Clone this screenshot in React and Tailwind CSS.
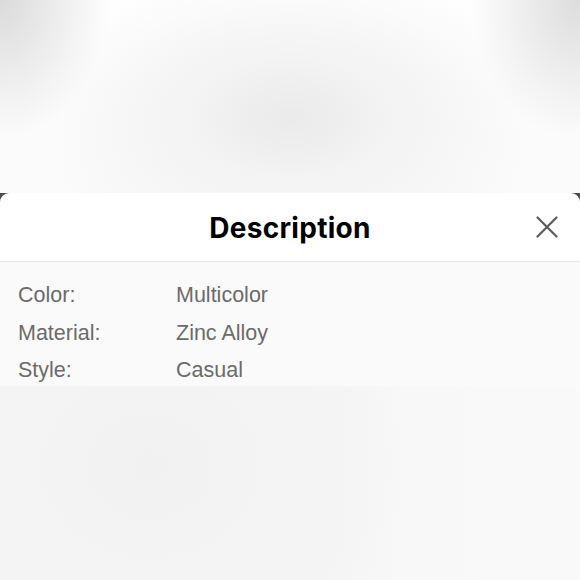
import React from "react";

const rows = [
  { label: "Color:", value: "Multicolor" },
  { label: "Material:", value: "Zinc Alloy" },
  { label: "Style:", value: "Casual" },
];

const CloseIcon = () => (
  <svg width="22" height="22" viewBox="0 0 22 22" fill="none">
    <path
      d="M1.5 1.5L20.5 20.5M20.5 1.5L1.5 20.5"
      stroke="#5c5c5c"
      strokeWidth="2.2"
      strokeLinecap="round"
    />
  </svg>
);

export default function App() {
  return (
    <div className="w-[580px] h-[580px] flex flex-col overflow-hidden bg-white font-['Liberation_Sans',Arial,sans-serif]">
      {/* blurred backdrop above the sheet */}
      <div className="h-[193px] shrink-0 bg-[radial-gradient(ellipse_250px_150px_at_290px_118px,#eaeaea_0%,#f3f3f3_40%,rgba(254,254,254,0)_100%),radial-gradient(ellipse_110px_140px_at_0px_0px,#dadada_0%,rgba(254,254,254,0)_100%),radial-gradient(ellipse_110px_140px_at_580px_0px,#dcdcdc_0%,rgba(254,254,254,0)_100%),linear-gradient(#fefefe,#fafafa)]" />

      <div className="flex-1 flex flex-col bg-[#4a4a4a]">
        <div className="rounded-t-[9px] bg-white h-[69px] shrink-0 flex items-center justify-center relative border-b border-[#e8e8e8]">
          <h1 className="text-[28px] font-bold text-black tracking-[0.3px] pt-[1px] font-['Inter',sans-serif]">
            Description
          </h1>
          <button className="absolute right-[22px] top-[23px]">
            <CloseIcon />
          </button>
        </div>

        <div className="bg-[#fafafa] pt-[15px] h-[124px] shrink-0">
          {rows.map((r) => (
            <div key={r.label} className="flex text-[21.5px] leading-[37.5px] text-[#6b6b6b]">
              <span className="w-[176px] pl-[18px] shrink-0">{r.label}</span>
              <span>{r.value}</span>
            </div>
          ))}
        </div>

        <div className="flex-1 bg-[radial-gradient(ellipse_260px_220px_at_150px_80px,#f1f1f1_0%,#f4f4f4_60%,rgba(248,248,248,0)_100%),linear-gradient(90deg,#f4f4f4_0%,#f5f5f5_55%,#f8f8f8_70%,#f9f9f9_100%)]" />
      </div>
    </div>
  );
}
